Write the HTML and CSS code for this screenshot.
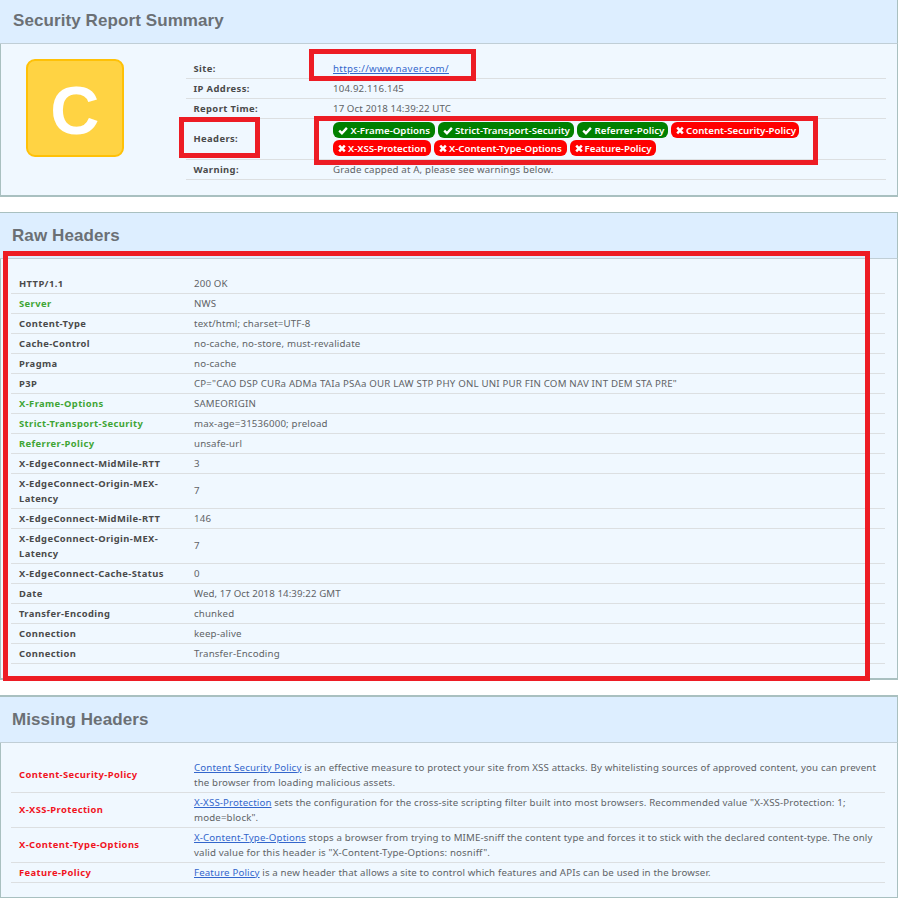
FILE: index.html
```html
<!DOCTYPE html>
<html lang="en">
<head>
<meta charset="utf-8">
<title>Security Report</title>
<link rel="stylesheet" href="styles.css">
</head>
<body>
<svg class="defs" width="0" height="0" aria-hidden="true">
  <symbol id="check" viewBox="0 0 10 9"><path d="M1.2 4.7 3.9 7.2 8.9 1.9" fill="none" stroke="#fff" stroke-width="2.4"/></symbol>
  <symbol id="times" viewBox="0 0 8 9"><path d="M1.2 1.7 6.8 7.3M6.8 1.7 1.2 7.3" fill="none" stroke="#fff" stroke-width="2.5"/></symbol>
</svg>
<section class="panel summary">
  <h2>Security Report Summary</h2>
  <div class="body">
    <div class="grade"><span>C</span></div>
    <div class="rows">
      <div class="row"><b>Site:</b><span class="site"><a>https://www.naver.com/</a></span></div>
      <div class="row"><b>IP Address:</b><span>104.92.116.145</span></div>
      <div class="row"><b>Report Time:</b><span class="time">17 Oct 2018 14:39:22 UTC</span></div>
      <div class="row tags"><b>Headers:</b>
        <div class="pills">
          <div class="line">
            <span class="pill ok w102"><svg class="ck"><use href="#check"/></svg>X-Frame-Options</span>
            <span class="pill ok w137"><svg class="ck"><use href="#check"/></svg>Strict-Transport-Security</span>
            <span class="pill ok w91"><svg class="ck"><use href="#check"/></svg>Referrer-Policy</span>
            <span class="pill bad w128"><svg class="tm"><use href="#times"/></svg>Content-Security-Policy</span>
          </div>
          <div class="line">
            <span class="pill bad w98"><svg class="tm"><use href="#times"/></svg>X-XSS-Protection</span>
            <span class="pill bad w133"><svg class="tm"><use href="#times"/></svg>X-Content-Type-Options</span>
            <span class="pill bad w87"><svg class="tm"><use href="#times"/></svg>Feature-Policy</span>
          </div>
        </div>
      </div>
      <div class="row"><b>Warning:</b><span>Grade capped at A, please see warnings below.</span></div>
    </div>
  </div>
</section>
<section class="panel raw">
  <h2>Raw Headers</h2>
  <div class="body">
    <div class="rows">
      <div class="row"><b>HTTP/1.1</b><span>200 OK</span></div>
      <div class="row good"><b>Server</b><span>NWS</span></div>
      <div class="row"><b>Content-Type</b><span>text/html; charset=UTF-8</span></div>
      <div class="row"><b>Cache-Control</b><span>no-cache, no-store, must-revalidate</span></div>
      <div class="row"><b>Pragma</b><span>no-cache</span></div>
      <div class="row"><b>P3P</b><span class="p3p">CP="CAO DSP CURa ADMa TAIa PSAa OUR LAW STP PHY ONL UNI PUR FIN COM NAV INT DEM STA PRE"</span></div>
      <div class="row good"><b>X-Frame-Options</b><span>SAMEORIGIN</span></div>
      <div class="row good"><b>Strict-Transport-Security</b><span>max-age=31536000; preload</span></div>
      <div class="row good"><b>Referrer-Policy</b><span>unsafe-url</span></div>
      <div class="row"><b>X-EdgeConnect-MidMile-RTT</b><span>3</span></div>
      <div class="row tall"><b>X-EdgeConnect-Origin-MEX-<br>Latency</b><span>7</span></div>
      <div class="row"><b>X-EdgeConnect-MidMile-RTT</b><span>146</span></div>
      <div class="row tall"><b>X-EdgeConnect-Origin-MEX-<br>Latency</b><span>7</span></div>
      <div class="row"><b>X-EdgeConnect-Cache-Status</b><span>0</span></div>
      <div class="row"><b>Date</b><span class="time">Wed, 17 Oct 2018 14:39:22 GMT</span></div>
      <div class="row"><b>Transfer-Encoding</b><span>chunked</span></div>
      <div class="row"><b>Connection</b><span>keep-alive</span></div>
      <div class="row"><b>Connection</b><span>Transfer-Encoding</span></div>
    </div>
  </div>
</section>
<section class="panel missing">
  <h2>Missing Headers</h2>
  <div class="body">
    <div class="rows">
      <div class="row tall"><b>Content-Security-Policy</b><span><a>Content Security Policy</a> is an effective measure to protect your site from XSS attacks. By whitelisting sources of approved content, you can prevent<br>the browser from loading malicious assets.</span></div>
      <div class="row tall"><b>X-XSS-Protection</b><span><a>X-XSS-Protection</a> sets the configuration for the cross-site scripting filter built into most browsers. Recommended value "X-XSS-Protection: 1;<br>mode=block".</span></div>
      <div class="row tall"><b>X-Content-Type-Options</b><span><a>X-Content-Type-Options</a> stops a browser from trying to MIME-sniff the content type and forces it to stick with the declared content-type. The only<br>valid value for this header is "X-Content-Type-Options: nosniff".</span></div>
      <div class="row"><b>Feature-Policy</b><span><a>Feature Policy</a> is a new header that allows a site to control which features and APIs can be used in the browser.</span></div>
    </div>
  </div>
</section>
<div class="mark mark-site"></div>
<div class="mark mark-label"></div>
<div class="mark mark-pills"></div>
<div class="mark mark-raw"></div>
</body>
</html>
```
FILE: styles.css
```css
* { box-sizing: border-box; }
body {
  margin: 0;
  position: relative;
  width: 898px;
  height: 898px;
  overflow: hidden;
  background: #fff;
  color: #606366;
  font: 9.7px/15px "Noto Sans", sans-serif;
  letter-spacing: 0.165px;
}
.defs { position: absolute; }
.panel { display: flex; flex-direction: column; }
.summary { height: 197px; margin-bottom: 15px; }
.raw { height: 468px; margin-bottom: 15px; border-top: 1px solid #a9c0c0; }
.missing { height: 203px; border-top: 2px solid #a9c0c0; }
h2 {
  flex: none;
  margin: 0;
  height: 46px;
  padding: 0 12px;
  background: #def;
  border-right: 1px solid #a9c0c0;
  border-bottom: 1px solid #c0ced6;
  color: #6b7075;
  font: bold 17px/45px "Liberation Sans", Arial, sans-serif;
  letter-spacing: 0.09px;
}
.summary h2 { height: 44px; padding-left: 13px; line-height: 41px; }
.body {
  flex: 1;
  display: flex;
  padding: 15px 12px 0 10px;
  background: #f0f8ff;
  border: solid #a9c0c0;
  border-width: 0 1px 2px;
}
.missing .body { border-bottom-width: 1px; }
.grade {
  display: flex;
  align-items: center;
  justify-content: center;
  width: 98px;
  height: 98px;
  margin: 0 62px 0 15px;
  background: #ffd343;
  border: 2px solid #ffc107;
  border-radius: 9px;
  color: #fff;
  font: bold 68px/1 "Liberation Sans", Arial, sans-serif;
}
.grade span { padding-top: 3px; }
.rows { flex: 1; }
.summary .body { padding-right: 11px; }
.row {
  display: grid;
  grid-template-columns: 175px 1fr;
  align-items: center;
  padding: 2px 0 2px 8px;
  border-bottom: 1px solid #dcdfe1;
  white-space: nowrap;
}
.summary .row { grid-template-columns: 139.5px 1fr; padding-left: 7.5px; }
.row b { color: #4a4a4a; font-size: 9.4px; letter-spacing: 0.4px; }
.tall { height: 35px; align-items: start; }
.raw .tall span { padding-top: 7px; }
.missing .tall b { padding-top: 7px; }
.missing span { letter-spacing: 0.147px; }
.p3p { letter-spacing: 0.195px; }
.good b { color: #3fa535; }
.missing b { color: #f0141e; }
a { color: #36c; text-decoration: underline; }
.site { letter-spacing: 0.34px; }
.time { letter-spacing: 0.09px; }
.summary .tags { height: 41px; }
.tags b { padding-bottom: 1px; }
.pills { display: flex; flex-direction: column; gap: 2px; }
.line { display: flex; gap: 3px; }
.pill {
  display: flex;
  align-items: center;
  height: 16px;
  padding-left: 5px;
  border-radius: 6px;
  color: #fff;
  font-weight: 600;
  letter-spacing: 0;
}
.ok { background: #008000; }
.bad { background: #f00; }
.ck { width: 10px; height: 9px; margin-right: 2.5px; }
.tm { width: 8px; height: 9px; margin-right: 2px; }
.w102 { width: 101.5px; }
.w137 { width: 136.5px; }
.w91 { width: 91px; }
.w128 { width: 128px; }
.w98 { width: 98px; }
.w133 { width: 132.5px; }
.w87 { width: 86.5px; }
.mark { position: absolute; border: 5px solid #ed1c24; }
.mark-site { left: 309px; top: 49px; width: 167px; height: 32px; }
.mark-label { left: 179px; top: 117px; width: 81px; height: 41px; }
.mark-pills { left: 314px; top: 116px; width: 504px; height: 49px; }
.mark-raw { left: 3px; top: 251px; width: 867px; height: 430px; }
```
